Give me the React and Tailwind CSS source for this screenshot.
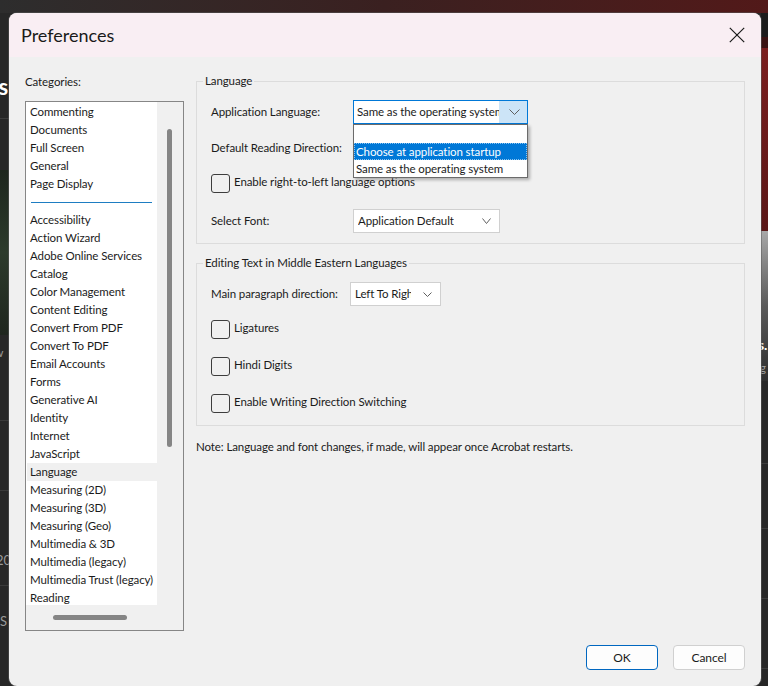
import React from "react";

const group1 = ["Commenting", "Documents", "Full Screen", "General", "Page Display"];
const group2 = [
  "Accessibility",
  "Action Wizard",
  "Adobe Online Services",
  "Catalog",
  "Color Management",
  "Content Editing",
  "Convert From PDF",
  "Convert To PDF",
  "Email Accounts",
  "Forms",
  "Generative AI",
  "Identity",
  "Internet",
  "JavaScript",
  "Language",
  "Measuring (2D)",
  "Measuring (3D)",
  "Measuring (Geo)",
  "Multimedia & 3D",
  "Multimedia (legacy)",
  "Multimedia Trust (legacy)",
  "Reading",
];

function Chevron({ w = 10, h = 6 }) {
  return (
    <svg width={w} height={h} viewBox={`0 0 ${w} ${h}`} className="shrink-0">
      <path
        d={`M0.5 0.5 L${w / 2} ${h - 0.5} L${w - 0.5} 0.5`}
        stroke="#5f5f5f"
        strokeWidth="1"
        fill="none"
      />
    </svg>
  );
}

function Dropdown({ width, text }) {
  return (
    <div
      className={`${width} h-[24px] border border-[#d0d0d0] bg-white flex items-center justify-between pl-[4px] pr-[8px] overflow-hidden`}
    >
      <span className="whitespace-nowrap overflow-hidden">{text}</span>
      <Chevron w={9} h={6} />
    </div>
  );
}

function Checkbox({ label }) {
  return (
    <div className="flex items-center h-[19px]">
      <div className="w-[19px] h-[19px] rounded-[3px] border border-[#3d3d3d] shrink-0" />
      <span className="ml-[4px] pb-[3px] whitespace-nowrap">{label}</span>
    </div>
  );
}

function Item({ label, selected }) {
  return (
    <div
      className={`h-[18px] leading-[18px] ml-[1px] pl-[3px] whitespace-nowrap ${
        selected ? "bg-[#f0f0f0]" : ""
      }`}
    >
      {label}
    </div>
  );
}

export default function App() {
  return (
    <div className="relative w-[768px] h-[686px] overflow-hidden bg-[#272727] font-['Lato','Open_Sans',sans-serif] text-[11.5px] tracking-[-0.1px] text-[#1b1b1b]">
      {/* backdrop of the application behind the dialog */}
      <div className="absolute left-0 top-0 w-full h-[13px] bg-gradient-to-r from-[#2d2d2d] via-[#3a2020] to-[#521919]" />
      <div className="absolute left-0 top-[118px] w-[9px] h-px bg-[#3c3c3c]" />
      <div className="absolute left-0 top-[170px] w-[9px] h-[165px] bg-gradient-to-b from-[#1d261d] via-[#2d3b2c] to-[#1f261e]" />
      <div className="absolute left-0 top-[420px] w-[9px] h-px bg-[#3a3a3a]" />
      <div className="absolute left-0 top-[490px] w-[9px] h-px bg-[#3a3a3a]" />
      <div className="absolute left-0 top-[585px] w-[9px] h-px bg-[#3a3a3a]" />
      <span className="absolute left-[-12px] top-[70px] text-[22px] font-bold text-white">cs</span>
      <span className="absolute left-[-6px] top-[344px] text-[12px] text-[#9a9a9a]">w</span>
      <span className="absolute left-[-4px] top-[551px] text-[13px] text-[#9a9a9a]">20</span>
      <span className="absolute left-[-6px] top-[612px] text-[13px] text-[#9a9a9a]">cS</span>

      <div className="absolute left-[761px] top-[13px] w-[7px] h-[24px] bg-[#1c1c1c]" />
      <div className="absolute left-[761px] top-[37px] w-[7px] h-[11px] bg-[#3b1313]" />
      <div className="absolute left-[761px] top-[48px] w-[7px] h-[183px] bg-gradient-to-b from-[#7b1f1f] to-[#5a1616]" />
      <div className="absolute left-[761px] top-[231px] w-[7px] h-[150px] bg-gradient-to-b from-[#a8a8a8] via-[#5a5a5a] to-[#2e2e2e]" />
      <div className="absolute left-[761px] top-[463px] w-[7px] h-px bg-[#3c3c3c]" />
      <div className="absolute left-[761px] top-[528px] w-[7px] h-px bg-[#3c3c3c]" />
      <div className="absolute left-[761px] top-[598px] w-[7px] h-px bg-[#3c3c3c]" />
      <div className="absolute left-[761px] top-[668px] w-[7px] h-px bg-[#3c3c3c]" />
      <span className="absolute left-[758px] top-[334px] text-[14px] font-bold text-white">s.</span>
      <span className="absolute left-[757px] top-[359px] text-[12px] text-[#a0a0a0]">ig</span>

      {/* dialog */}
      <div className="relative pl-[9px] pt-[13px]">
        <div className="w-[752px] h-[673px] rounded-[8px] overflow-hidden bg-[#f0f0f0] flex flex-col shadow-[0_0_0_1px_rgba(90,90,90,0.5)]">
          {/* title bar */}
          <div className="h-[44px] bg-[#f9eef3] flex items-center justify-between pl-[12px] pr-[16px] shrink-0">
            <span className="text-[18px] tracking-normal text-[#1a1a1a] leading-none">Preferences</span>
            <svg width="16" height="16" viewBox="0 0 16 16">
              <path d="M0.8 0.8L15.2 15.2M15.2 0.8L0.8 15.2" stroke="#1a1a1a" strokeWidth="1.2" />
            </svg>
          </div>

          {/* body */}
          <div className="flex-1 flex px-[16px]">
            {/* categories */}
            <div className="w-[159px] pt-[17px] shrink-0">
              <div className="h-[16px] leading-[16px]">Categories:</div>
              <div className="mt-[11px] w-[159px] h-[530px] border border-[#868686] bg-[#f0f0f0] flex flex-col">
                <div className="flex h-[503px]">
                  <div className="w-[131px] h-[503px] bg-white overflow-hidden pt-[1px]">
                    {group1.map((g) => (
                      <Item key={g} label={g} />
                    ))}
                    <div className="h-[18px] flex items-center">
                      <div className="ml-[5px] w-[121px] h-px bg-[#1e7dc2]" />
                    </div>
                    {group2.map((g) => (
                      <Item key={g} label={g} selected={g === "Language"} />
                    ))}
                  </div>
                  <div className="w-[26px] pt-[27px] pl-[10px]">
                    <div className="w-[5px] h-[318px] rounded-full bg-[#858585]" />
                  </div>
                </div>
                <div className="h-[25px] pt-[10px] pl-[27px]">
                  <div className="w-[74px] h-[5px] rounded-full bg-[#858585]" />
                </div>
              </div>
            </div>

            {/* right side */}
            <div className="ml-[12px] w-[550px] pt-[17px]">
              <fieldset className="border border-[#dcdcdc] m-0 p-0 pl-[14px] pb-[10px] min-w-0">
                <legend className="ml-[-8px] px-[2px] leading-[14px]">Language</legend>
                <div className="mt-[12px] h-[24px] flex items-center">
                  <span className="w-[142px] shrink-0">Application Language:</span>
                  <div className="relative z-10">
                    <div className="w-[175px] h-[24px] border border-[#0078d7] bg-[#cce4f7] flex">
                      <div className="w-[145px] bg-white pl-[3px] flex items-center overflow-hidden whitespace-nowrap">
                        Same as the operating system
                      </div>
                      <div className="flex-1 flex items-center justify-end pr-[7px]">
                        <Chevron w={11} h={6} />
                      </div>
                    </div>
                    <div className="absolute left-0 top-[24px] w-[175px] border border-[#6b6b6b] bg-white shadow-[2px_2px_3px_rgba(0,0,0,0.28)]">
                      <div className="h-[18px]" />
                      <div className="h-[17px] bg-[#0078d7] text-white leading-[15px] pl-[1px] border border-dotted border-[#8cc4f0] whitespace-nowrap">
                        Choose at application startup
                      </div>
                      <div className="h-[17px] leading-[17px] pl-[2px] whitespace-nowrap">
                        Same as the operating system
                      </div>
                    </div>
                  </div>
                </div>
                <div className="mt-[12px] h-[24px] flex items-center">
                  <span className="w-[142px] shrink-0">Default Reading Direction:</span>
                  <Dropdown width="w-[175px]" text="" />
                </div>
                <div className="mt-[14px]">
                  <Checkbox label="Enable right-to-left language options" />
                </div>
                <div className="mt-[16px] h-[24px] flex items-center">
                  <span className="w-[142px] shrink-0">Select Font:</span>
                  <Dropdown width="w-[147px]" text="Application Default" />
                </div>
              </fieldset>

              <fieldset className="mt-[12px] border border-[#dcdcdc] m-0 p-0 pl-[14px] pb-[12px] min-w-0">
                <legend className="ml-[-8px] px-[2px] leading-[14px]">
                  Editing Text in Middle Eastern Languages
                </legend>
                <div className="mt-[12px] h-[24px] flex items-center">
                  <span className="w-[139px] shrink-0">Main paragraph direction:</span>
                  <div className="w-[91px] h-[24px] border border-[#d0d0d0] bg-white flex items-center pl-[4px] pr-[8px]">
                    <span className="w-[56px] overflow-hidden whitespace-nowrap">Left To Right</span>
                    <span className="ml-auto">
                      <Chevron w={9} h={5} />
                    </span>
                  </div>
                </div>
                <div className="mt-[14px]">
                  <Checkbox label="Ligatures" />
                </div>
                <div className="mt-[18px]">
                  <Checkbox label="Hindi Digits" />
                </div>
                <div className="mt-[18px]">
                  <Checkbox label="Enable Writing Direction Switching" />
                </div>
              </fieldset>

              <div className="mt-[13px] h-[16px] leading-[16px] whitespace-nowrap">
                Note: Language and font changes, if made, will appear once Acrobat restarts.
              </div>
            </div>
          </div>

          {/* footer */}
          <div className="flex justify-end gap-[15px] pr-[16px] pb-[16px] shrink-0">
            <button className="w-[72px] h-[25px] rounded-[4px] border border-[#0067c0] bg-[#fdfdfd] text-[12px] text-[#1b1b1b]">
              OK
            </button>
            <button className="w-[72px] h-[25px] rounded-[4px] border border-[#d0d0d0] bg-[#fdfdfd] text-[12px] text-[#1b1b1b]">
              Cancel
            </button>
          </div>
        </div>
      </div>
    </div>
  );
}
